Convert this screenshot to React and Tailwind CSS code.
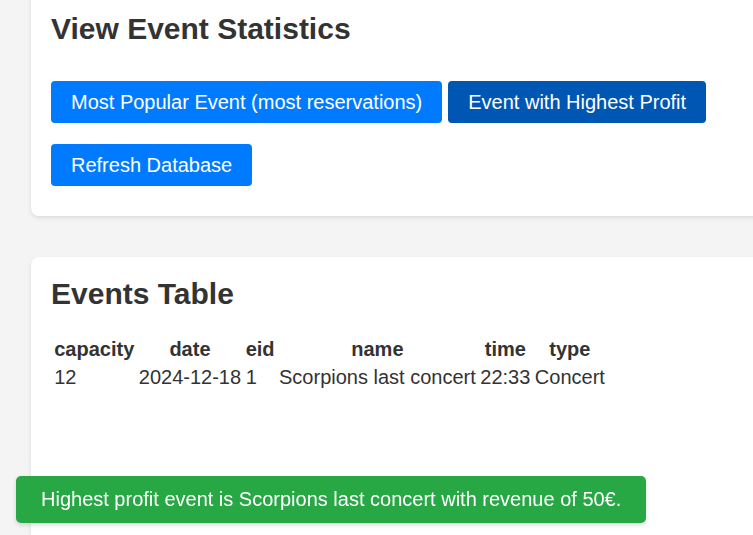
export default function App() {
  const events = [
    {
      capacity: 12,
      date: "2024-12-18",
      eid: 1,
      name: "Scorpions last concert",
      time: "22:33",
      type: "Concert",
    },
  ];
  const cols = ["capacity", "date", "eid", "name", "time", "type"];

  return (
    <div
      className="h-[535px] overflow-hidden bg-[#f4f4f4] pl-[31px] text-[#333]"
      style={{ fontFamily: "'Liberation Sans', Arial, sans-serif" }}
    >
      {/* Statistics card (page is scrolled a little) */}
      <div className="-mt-[8px] w-[760px] rounded-[8px] bg-white px-[20px] pt-[20px] pb-[20px] shadow-[0_2px_4px_rgba(0,0,0,0.1)]">
        <h2 className="text-[30px] font-bold leading-[34px]">
          View Event Statistics
        </h2>
        <div className="mt-[35px] flex gap-x-[6px]">
          <button className="rounded-[4px] bg-[#007bff] px-[20px] py-[10px] text-[20px] leading-[22px] text-white">
            Most Popular Event (most reservations)
          </button>
          <button className="rounded-[4px] bg-[#0056b3] px-[20px] py-[10px] text-[20px] leading-[22px] text-white">
            Event with Highest Profit
          </button>
        </div>
        <div className="mt-[21px] mb-[10px] flex">
          <button className="rounded-[4px] bg-[#007bff] px-[20px] py-[10px] text-[20px] leading-[22px] text-white">
            Refresh Database
          </button>
        </div>
      </div>

      {/* Events table card */}
      <div className="mt-[41px] min-h-[320px] w-[760px] rounded-[8px] bg-white p-[20px] shadow-[0_2px_4px_rgba(0,0,0,0.1)]">
        <h2 className="text-[30px] font-bold leading-[34px]">Events Table</h2>
        <table className="mt-[24px] border-separate border-spacing-[2px] text-[20px] leading-[23.5px]">
          <thead>
            <tr>
              {cols.map((c) => (
                <th key={c} className="px-[1.25px] py-px text-center font-bold">
                  {c}
                </th>
              ))}
            </tr>
          </thead>
          <tbody>
            {events.map((e) => (
              <tr key={e.eid}>
                {cols.map((c) => (
                  <td key={c} className="px-[1.25px] py-px text-left">
                    {e[c]}
                  </td>
                ))}
              </tr>
            ))}
          </tbody>
        </table>
      </div>

      {/* Toast */}
      <div className="fixed bottom-[12px] left-[16px] rounded-[5px] bg-[#28a745] px-[25px] py-[12px] text-[20px] leading-[23px] text-white shadow-[0_2px_4px_rgba(0,0,0,0.15)]">
        Highest profit event is Scorpions last concert with revenue of 50€.
      </div>
    </div>
  );
}
